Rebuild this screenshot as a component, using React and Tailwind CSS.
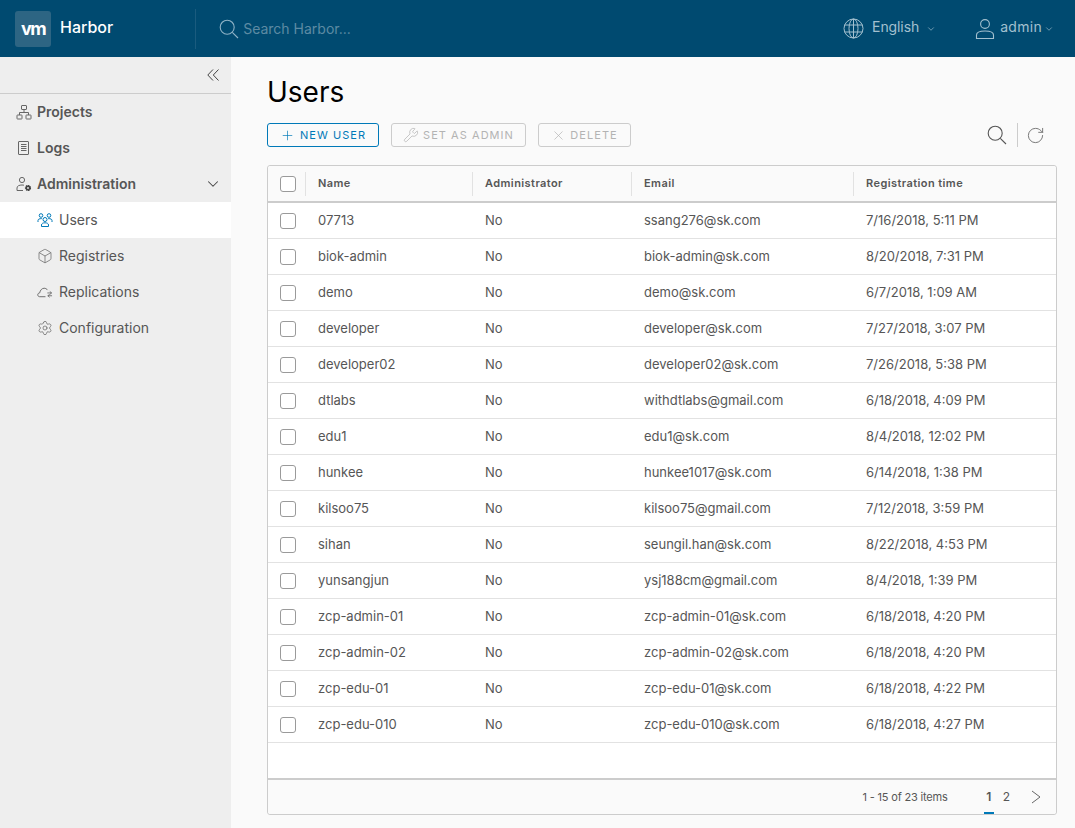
import { ChevronDown, Plus, RotateCw, X, Wrench, Box, Settings } from "lucide-react";

const users = [
    ["07713", "ssang276@sk.com", "7/16/2018, 5:11 PM"],
    ["biok-admin", "biok-admin@sk.com", "8/20/2018, 7:31 PM"],
    ["demo", "demo@sk.com", "6/7/2018, 1:09 AM"],
    ["developer", "developer@sk.com", "7/27/2018, 3:07 PM"],
    ["developer02", "developer02@sk.com", "7/26/2018, 5:38 PM"],
    ["dtlabs", "withdtlabs@gmail.com", "6/18/2018, 4:09 PM"],
    ["edu1", "edu1@sk.com", "8/4/2018, 12:02 PM"],
    ["hunkee", "hunkee1017@sk.com", "6/14/2018, 1:38 PM"],
    ["kilsoo75", "kilsoo75@gmail.com", "7/12/2018, 3:59 PM"],
    ["sihan", "seungil.han@sk.com", "8/22/2018, 4:53 PM"],
    ["yunsangjun", "ysj188cm@gmail.com", "8/4/2018, 1:39 PM"],
    ["zcp-admin-01", "zcp-admin-01@sk.com", "6/18/2018, 4:20 PM"],
    ["zcp-admin-02", "zcp-admin-02@sk.com", "6/18/2018, 4:20 PM"],
    ["zcp-edu-01", "zcp-edu-01@sk.com", "6/18/2018, 4:22 PM"],
    ["zcp-edu-010", "zcp-edu-010@sk.com", "6/18/2018, 4:27 PM"],
];

const SearchIcon = ({ color, className }) => (
    <svg className={className} width="20" height="20" viewBox="0 0 20 20" fill="none" stroke={color} strokeWidth="1.1">
        <circle cx="8.2" cy="8.2" r="7" />
        <path d="M13.3 13.3L19 19" />
    </svg>
);

const GlobeIcon = ({ className }) => (
    <svg className={className} width="21" height="21" viewBox="0 0 21 21" fill="none" stroke="#a3c0cf" strokeWidth="1">
        <circle cx="10.5" cy="10.5" r="9.5" />
        <ellipse cx="10.5" cy="10.5" rx="4.5" ry="9.5" />
        <path d="M10.5 1V20M1.5 7H19.5M1.5 14H19.5" />
    </svg>
);

const UserIcon = ({ className }) => (
    <svg className={className} width="22" height="22" viewBox="0 0 22 22" fill="none" stroke="#a3c0cf" strokeWidth="1.1">
        <circle cx="11" cy="6" r="4.4" />
        <path d="M2.5 20.5V17C2.5 14.2 6.5 13 11 13C15.5 13 19.5 14.2 19.5 17V20.5Z" />
    </svg>
);

const ProjectsIcon = () => (
    <svg width="16" height="16" viewBox="0 0 16 16" fill="none" stroke="#666" strokeWidth="1">
        <rect x="5.5" y="1.5" width="5" height="4" rx="0.5" />
        <rect x="1" y="11" width="5" height="4" rx="0.5" />
        <rect x="10" y="11" width="5" height="4" rx="0.5" />
        <path d="M8 5.5V8.5M3.5 11V8.5H12.5V11" />
    </svg>
);

const LogsIcon = () => (
    <svg width="16" height="16" viewBox="0 0 16 16" fill="none" stroke="#666" strokeWidth="1">
        <rect x="2.5" y="1.5" width="10" height="13" rx="0.5" />
        <path d="M5 4.5H10.5M5 6.5H10.5M5 8.5H10.5M5 10.5H10.5" />
    </svg>
);

const AdminIcon = () => (
    <svg width="16" height="16" viewBox="0 0 16 16" fill="none" stroke="#666" strokeWidth="1">
        <circle cx="6" cy="4" r="2.6" />
        <path d="M1 14.5V12C1 9.8 3.5 9 6 9C6.8 9 7.4 9.1 8 9.2M1 14.5H7" />
        <circle cx="12" cy="12" r="2.4" fill="#444" stroke="#444" strokeWidth="1.4" strokeDasharray="1.4 0.6" />
        <circle cx="12" cy="12" r="0.9" fill="#eee" stroke="none" />
    </svg>
);

const UsersIcon = () => (
    <svg width="16" height="16" viewBox="0 0 16 16" fill="none" stroke="#0079b8" strokeWidth="1">
        <circle cx="8" cy="7.5" r="2" />
        <path d="M4.5 14.5V13C4.5 11.5 6 10.8 8 10.8C10 10.8 11.5 11.5 11.5 13V14.5Z" />
        <circle cx="4" cy="3.5" r="1.8" />
        <circle cx="12" cy="3.5" r="1.8" />
        <path d="M1 10V8.5C1 7.2 2.3 6.6 4.8 6.6M15 10V8.5C15 7.2 13.7 6.6 11.2 6.6" />
    </svg>
);

const CloudIcon = () => (
    <svg width="17" height="16" viewBox="0 0 17 16" fill="none" stroke="#666" strokeWidth="1">
        <path d="M9 13H2.8C1.5 13 0.8 12 0.8 11C0.8 9.8 1.7 9 2.9 8.9C3.3 6.2 5.2 4 7.6 4C9.2 4 10.4 4.8 11.2 6" />
        <path d="M11 9H15.5M13.6 7.4L15.5 9L13.6 10.6M16 12H11.5M13.4 10.6L11.5 12L13.4 13.6" strokeWidth="0.9" />
    </svg>
);

const NavItem = ({ icon, label, bold, active, chevron }) => (
    <div className={`flex h-9 items-center ${bold ? "pl-4" : "pl-[37px]"} ${active ? "bg-white" : ""}`}>
        <span className="flex w-4 justify-center">{icon}</span>
        <span className={`${bold ? "ml-[5px] font-semibold" : "ml-[6px]"} pb-[2px] text-[14px] text-[#565656]`}>
            {label}
        </span>
        {chevron && <ChevronDown className="ml-auto mr-[9px]" size={18} strokeWidth={1.4} color="#444" />}
    </div>
);

const Checkbox = () => (
    <span className="block h-4 w-4 rounded-[3px] border border-[#9a9a9a] bg-white" />
);

const ToolButton = ({ children, primary, className }) => (
    <button
        className={`flex h-6 items-center justify-center rounded-[3px] border text-[11px] tracking-[1.05px] ${
            primary ? "border-[#0079b8] text-[#0079b8]" : "border-[#ccc] text-[#b3b3b3]"
        } ${className}`}
    >
        {children}
    </button>
);

const HeadCell = ({ label, width }) => (
    <div className={`flex h-6 items-center border-l border-[#e2e2e2] pl-3 ${width}`}>
        <span className="text-[11px] font-semibold tracking-[0.42px] text-[#565656]">{label}</span>
    </div>
);

const App = () => {
    return (
        <div className="flex h-[828px] w-[1075px] flex-col overflow-hidden bg-[#fafafa] font-['Inter','Liberation_Sans',sans-serif]">
            <header className="flex h-[57px] shrink-0 items-center bg-[#004a70]">
                <div className="ml-[15px] flex h-9 w-9 items-center justify-center rounded-[3px] bg-[#2d6583]">
                    <span className="text-[18px] leading-none font-bold tracking-[-1.5px] text-white">vm</span>
                </div>
                <span className="ml-[9px] pb-[3px] text-[16px] font-medium text-white">Harbor</span>
                <div className="ml-[82px] h-10 w-px bg-[#1a5b7e]" />
                <SearchIcon className="ml-[23px]" color="#8fb3c6" />
                <span className="ml-[4px] pb-[1px] text-[14px] text-[#5d8aa3]">Search Harbor...</span>
                <GlobeIcon className="ml-auto" />
                <span className="ml-[8px] pb-[5px] text-[14px] tracking-[-0.1px] text-[#a3c0cf]">English</span>
                <ChevronDown className="ml-[7px]" size={10} strokeWidth={1.6} color="#a3c0cf" />
                <UserIcon className="ml-[38px]" />
                <span className="ml-[4px] pb-[5px] text-[14px] tracking-[0.3px] text-[#a3c0cf]">admin</span>
                <ChevronDown className="ml-[2px] mr-[21px]" size={10} strokeWidth={1.6} color="#a3c0cf" />
            </header>

            <div className="flex min-h-0 flex-1">
                <aside className="w-[231px] shrink-0 bg-[#eeeeee]">
                    <div className="flex h-[37px] items-center justify-end border-b border-[#ccc] pr-[12px]">
                        <svg width="12" height="12" viewBox="0 0 12 12" fill="none" stroke="#444" strokeWidth="1">
                            <path d="M6 0.5L0.8 6L6 11.5M11.5 0.5L6.3 6L11.5 11.5" />
                        </svg>
                    </div>
                    <NavItem bold icon={<ProjectsIcon />} label="Projects" />
                    <NavItem bold icon={<LogsIcon />} label="Logs" />
                    <NavItem bold chevron icon={<AdminIcon />} label="Administration" />
                    <NavItem active icon={<UsersIcon />} label="Users" />
                    <NavItem icon={<Box size={16} strokeWidth={1.1} color="#666" />} label="Registries" />
                    <NavItem icon={<CloudIcon />} label="Replications" />
                    <NavItem icon={<Settings size={16} strokeWidth={1.1} color="#666" />} label="Configuration" />
                </aside>

                <main className="min-w-0 flex-1 pl-9 pr-[18px]">
                    <h1 className="mt-[19px] h-[32px] text-[28px] leading-[32px] font-normal text-black">Users</h1>
                    <div className="mt-[15px] flex h-6 items-center">
                        <ToolButton primary className="w-[112px]">
                            <Plus size={15} strokeWidth={1.1} className="mr-[5px]" />
                            NEW USER
                        </ToolButton>
                        <ToolButton className="ml-3 w-[135px]">
                            <Wrench size={16} strokeWidth={1.1} className="mr-[4px]" />
                            SET AS ADMIN
                        </ToolButton>
                        <ToolButton className="ml-3 w-[93px]">
                            <X size={15} strokeWidth={1.1} className="mr-[4px]" />
                            DELETE
                        </ToolButton>
                        <SearchIcon className="ml-auto" color="#555" />
                        <div className="ml-[10px] h-6 w-px bg-[#ccc]" />
                        <RotateCw className="ml-[8px] mr-[12px]" size={19} strokeWidth={1.1} color="#666" />
                    </div>

                    <div className="mt-[18px] flex h-[650px] flex-col rounded-[3px] border border-[#ccc] bg-white">
                        <div className="flex h-[37px] shrink-0 items-center rounded-t-[3px] border-b-2 border-[#ccc] bg-[#fafafa]">
                            <div className="flex w-[37px] shrink-0 justify-center pl-[3px]"><Checkbox /></div>
                            <HeadCell label="Name" width="w-[167px]" />
                            <HeadCell label="Administrator" width="w-[159px]" />
                            <HeadCell label="Email" width="w-[222px]" />
                            <HeadCell label="Registration time" width="flex-1" />
                        </div>
                        <div className="flex-1">
                            {users.map(([name, email, time]) => (
                                <div key={name} className="flex h-9 items-center border-b border-[#e2e2e2] text-[13px] text-[#565656]">
                                    <div className="flex w-[37px] shrink-0 justify-center pl-[3px]"><Checkbox /></div>
                                    <div className="w-[167px] pl-[13px]">{name}</div>
                                    <div className="w-[159px] pl-[13px]">No</div>
                                    <div className="w-[222px] pl-[13px]">{email}</div>
                                    <div className="flex-1 pl-[13px]">{time}</div>
                                </div>
                            ))}
                        </div>
                        <div className="flex h-[36px] shrink-0 items-center justify-end rounded-b-[3px] border-t-2 border-[#ccc] bg-[#fafafa] text-[#565656]">
                            <span className="text-[11px] tracking-[-0.18px]">1 - 15 of 23 items</span>
                            <span className="relative ml-[36px] flex h-full w-[10px] items-center justify-center text-[12px] font-semibold">
                                1
                                <span className="absolute bottom-0 left-0 h-[2px] w-[10px] bg-[#0079b8]" />
                            </span>
                            <span className="ml-[9px] text-[12px]">2</span>
                            <svg className="ml-[21px] mr-[15px]" width="10" height="16" viewBox="0 0 10 16" fill="none" stroke="#666" strokeWidth="1">
                                <path d="M1 2L9 8L1 14" />
                            </svg>
                        </div>
                    </div>
                </main>
            </div>
        </div>
    );
};

export default App;
